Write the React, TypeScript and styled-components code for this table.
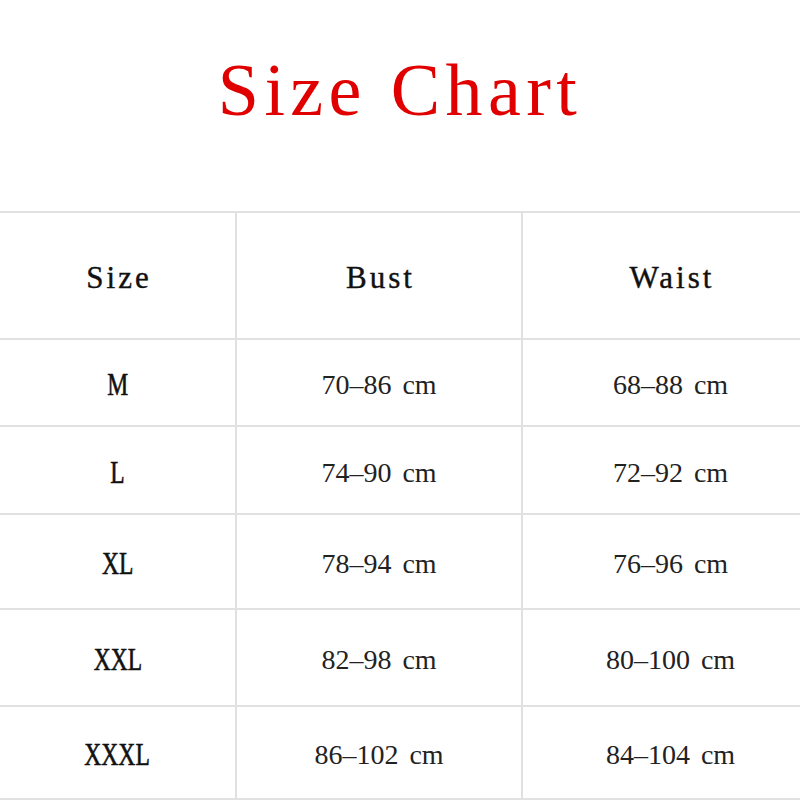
import React from "react";
import styled, { createGlobalStyle } from "styled-components";

const Global = createGlobalStyle`
  html, body { margin: 0; padding: 0; background: #ffffff; }
  body { font-family: "Liberation Serif", "Times New Roman", serif; }
`;

const Page = styled.div`
  width: 800px;
  height: 800px;
  overflow: hidden;
  background: #fff;
  display: flex;
  flex-direction: column;
`;

const TitleBlock = styled.header`
  height: 211px;
  box-sizing: border-box;
  padding-top: 53px;
  display: flex;
  justify-content: center;
`;

const Title = styled.h1`
  margin: 0;
  font-family: "Liberation Serif", serif;
  font-weight: normal;
  font-size: 74px;
  line-height: 1;
  letter-spacing: 5.4px;
  padding-left: 0;
  color: #e10000;
`;

const Table = styled.div`
  display: grid;
  grid-template-columns: 237px 286px 277px;
  border-top: 2px solid #e1e1e1;
`;

const Cell = styled.div<{ $h: number; $last?: boolean }>`
  height: ${(p) => p.$h}px;
  box-sizing: border-box;
  border-bottom: 2px solid #e1e1e1;
  border-right: ${(p) => (p.$last ? "none" : "2px solid #e1e1e1")};
  padding-left: ${(p) => (p.$last ? "18px" : "0")};
  padding-top: 5px;
  display: flex;
  align-items: center;
  justify-content: center;
`;

const HeadText = styled.span`
  font-size: 31px;
  color: #111;
  letter-spacing: 3px;
  margin-right: -3px;
  -webkit-text-stroke: 0.4px #111;
`;

const SizeText = styled.span`
  display: inline-block;
  font-size: 31px;
  color: #111;
  transform: scaleX(0.76);
  -webkit-text-stroke: 0.6px #111;
`;

const ValueText = styled.span`
  font-size: 28px;
  color: #222;
  word-spacing: 4px;
  white-space: pre;
`;

const rows = [
  { size: "M", bust: "70–86 cm", waist: "68–88 cm", h: 87 },
  { size: "L", bust: "74–90 cm", waist: "72–92 cm", h: 88 },
  { size: "XL", bust: "78–94 cm", waist: "76–96 cm", h: 95 },
  { size: "XXL", bust: "82–98 cm", waist: "80–100 cm", h: 97 },
  { size: "XXXL", bust: "86–102 cm", waist: "84–104 cm", h: 93 },
];

export default function App() {
  return (
    <>
      <Global />
      <Page>
        <TitleBlock>
          <Title>Size Chart</Title>
        </TitleBlock>
        <Table>
          <Cell $h={127}>
            <HeadText>Size</HeadText>
          </Cell>
          <Cell $h={127}>
            <HeadText>Bust</HeadText>
          </Cell>
          <Cell $h={127} $last>
            <HeadText>Waist</HeadText>
          </Cell>
          {rows.map((r) => (
            <React.Fragment key={r.size}>
              <Cell $h={r.h}>
                <SizeText>{r.size}</SizeText>
              </Cell>
              <Cell $h={r.h}>
                <ValueText>{r.bust}</ValueText>
              </Cell>
              <Cell $h={r.h} $last>
                <ValueText>{r.waist}</ValueText>
              </Cell>
            </React.Fragment>
          ))}
        </Table>
      </Page>
    </>
  );
}
